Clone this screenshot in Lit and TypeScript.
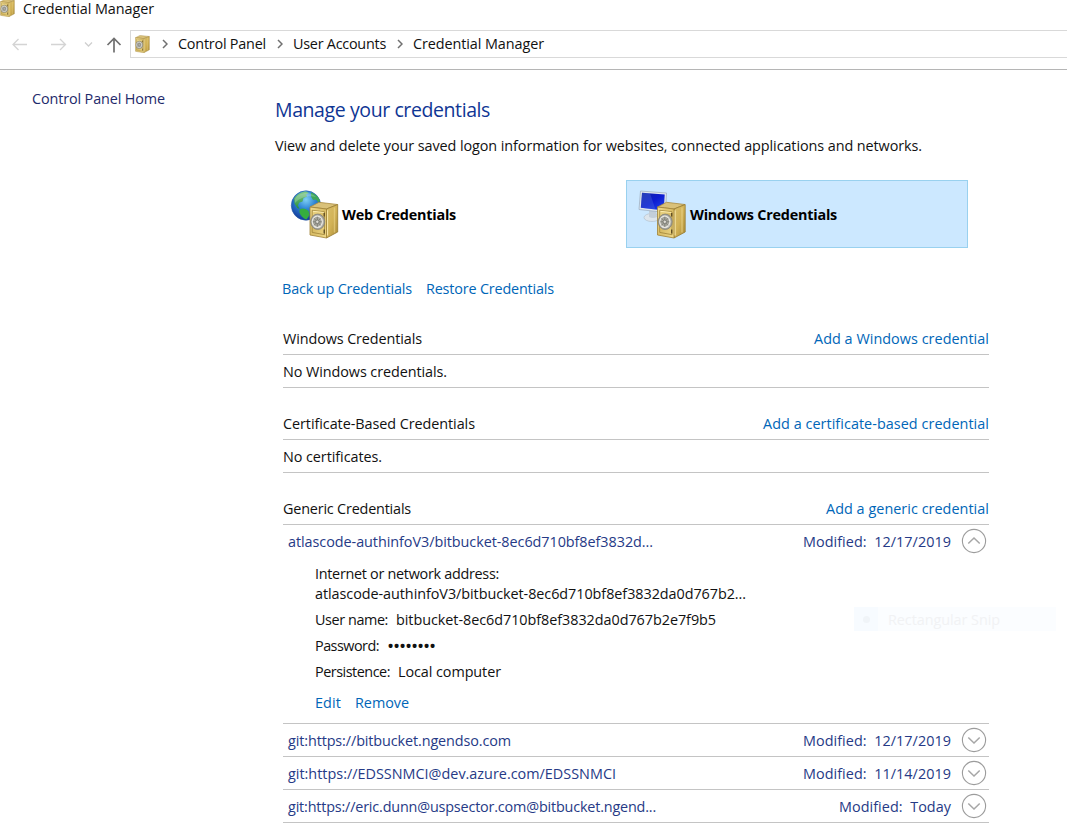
import { LitElement, html, svg, css } from "lit";
import { customElement, property } from "lit/decorators.js";

/** A single line of text whose tracking is adjusted to span a given width. */
@customElement("fit-text")
class FitText extends LitElement {
  @property() text = "";
  @property({ type: Number }) span = 0;

  static styles = css`
    :host { display: block; flex: none; white-space: pre; }
    .line { display: inline-block; }
  `;

  render() {
    return html`<span class="line">${this.text}</span>`;
  }

  updated() {
    const line = this.renderRoot.querySelector<HTMLElement>(".line")!;
    this.style.width = `${this.span}px`;
    line.style.letterSpacing = "0px";
    const natural = line.getBoundingClientRect().width;
    line.style.letterSpacing = `${(this.span - natural) / this.text.length}px`;
  }
}

const t = (text: string, span: number) => html`<fit-text .text=${text} .span=${span}></fit-text>`;

/** Golden safe, drawn in a 30 x 37 box. */
const safe = svg`
  <defs>
    <linearGradient id="front" x1="0" y1="0" x2="1" y2="1">
      <stop offset="0" stop-color="#f0dc90"/><stop offset=".5" stop-color="#d9bd66"/><stop offset="1" stop-color="#efd98a"/>
    </linearGradient>
    <linearGradient id="side" x1="0" y1="0" x2="1" y2="1">
      <stop offset="0" stop-color="#d8bf6c"/><stop offset=".5" stop-color="#d2b256"/><stop offset="1" stop-color="#a98a35"/>
    </linearGradient>
    <radialGradient id="dial">
      <stop offset="0" stop-color="#a3a29c"/><stop offset=".6" stop-color="#d5d4cd"/><stop offset="1" stop-color="#96958c"/>
    </radialGradient>
  </defs>
  <path d="M1 5.500 10 .8 28.500 3 17.500 7.500Z" fill="#d9c179" stroke="#a98b42" stroke-width=".8" stroke-linejoin="round"/>
  <path d="M17.500 7.500 28.700 3V30.500L17.500 36.500Z" fill="url(#side)" stroke="#967a30" stroke-width=".8" stroke-linejoin="round"/>
  <path d="M1 5.500 17.500 7.500V36.500L1 33.500Z" fill="url(#front)" stroke="#a08236" stroke-width=".8" stroke-linejoin="round"/>
  <path d="M3.200 8.800 15.500 10.300V33.200L3.200 30.900Z" fill="none" stroke="#a0843a" stroke-width=".8"/>
  <path d="M4 9.800 14.800 11M18.600 8.800V34" fill="none" stroke="#fff1b5" stroke-width=".9"/>
  <path d="M25.500 6V31" stroke="#ecd68b" stroke-width="1.500" opacity=".6"/>
  <path d="M15.200 11.500v3.500M15.200 28v4" stroke="#5b4a22" stroke-width="1.300"/>
  <ellipse cx="8.700" cy="20.300" rx="7" ry="7.700" fill="url(#dial)" stroke="#85847c" stroke-width=".8"/>
  <ellipse cx="8.300" cy="20.300" rx="5" ry="5.600" fill="#a8a79f" stroke="#e9e8e2" stroke-width="1.200"/>
  <path d="M3.800 20.300h9M8.300 15.200v10.200M5 16.700l6.600 7.200M11.600 16.700l-6.600 7.200" stroke="#77786f" stroke-width=".8"/>
  <circle cx="8.300" cy="20.300" r="1.700" fill="#dddcd5" stroke="#707069" stroke-width=".7"/>
`;

const smallSafe = html`<svg class="small-safe" width="15" height="18" viewBox="0 0 30 37" preserveAspectRatio="none">${safe}</svg>`;

const webIcon = html`<svg width="50" height="52" viewBox="0 0 50 52">
  <defs>
    <radialGradient id="sea" cx=".5" cy=".3" r=".7">
      <stop offset="0" stop-color="#7fd0f4"/><stop offset=".45" stop-color="#2f86d6"/><stop offset="1" stop-color="#12399a"/>
    </radialGradient>
    <linearGradient id="land" x1="0" y1="0" x2="0" y2="1">
      <stop offset="0" stop-color="#7fc98a"/><stop offset="1" stop-color="#27903a"/>
    </linearGradient>
  </defs>
  <circle cx="16" cy="16.500" r="14.700" fill="url(#sea)" stroke="#265ba4" stroke-width=".6"/>
  <path d="M4 9.500C7 5 12 2.500 16 2.500l3 1.500-3 1.500 1 2-3.500 1.600-1 3.500-3.500 1.200-1 3 1.500 3-2-.5-3-4.500Z" fill="url(#land)"/>
  <path d="M21 3.500c4 1 7.500 4.300 9 8l-1.500 2-2.500-3-3 .5-2-3.500Z" fill="#3fa75b"/>
  <path d="M9.500 20.500c3-2 6.500-1 9 1.500l1 4-3 4.500c-3.500-1-6-4-7-7Z" fill="#35ad3e"/>
  <path d="M5 10C9 3 20 2 26 8 19 6 10 8 5 14Z" fill="#fff" opacity=".22"/>
  <g transform="translate(19 12.500)">${safe}</g>
</svg>`;

const computerIcon = html`<svg width="50" height="52" viewBox="0 0 50 52">
  <defs>
    <linearGradient id="screen" x1="0" y1="0" x2="1" y2="1">
      <stop offset="0" stop-color="#1020a0"/><stop offset=".5" stop-color="#0c1bd0"/><stop offset="1" stop-color="#2048ee"/>
    </linearGradient>
  </defs>
  <ellipse cx="14" cy="28.500" rx="8" ry="4" fill="#dde5ec" stroke="#b4c1cd" stroke-width=".7"/>
  <path d="M11 21h7l1 7q-4 2-8 0Z" fill="#c3ced9"/>
  <path d="M2.500 2 28.500 4 27.500 23.500 1 20.500Z" fill="#e1e7ee" stroke="#9fb1c4" stroke-width=".8" stroke-linejoin="round"/>
  <path d="M4 3.700 26.700 5.500 25.800 21.500 2.800 18.800Z" fill="url(#screen)"/>
  <path d="M4 3.700 12 4.300 17.500 20.500 2.800 18.800Z" fill="#6087e6" opacity=".28"/>
  <g transform="translate(18.500 12.500)">${safe}</g>
</svg>`;

const crumbArrow = html`<svg class="crumb-arrow" width="6" height="10" viewBox="0 0 6 10"><path d="M1 1l4 4-4 4" fill="none" stroke="#707070" stroke-width="1.500"/></svg>`;

const toggle = (open: boolean) => html`<svg class="toggle" width="26" height="26" viewBox="0 0 26 26" fill="none">
  <circle cx="13" cy="13" r="11.600" stroke="#9c9c9c" stroke-width="1.100"/>
  <path d=${open ? "M7.300 15.500 13 10l5.700 5.500" : "M7.300 10.500 13 16l5.700-5.500"} stroke="#a6a6a6" stroke-width="1.500"/>
</svg>`;

@customElement("app-root")
class AppRoot extends LitElement {
  static styles = css`
    :host {
      display: block; position: relative; width: 1067px; height: 825px; overflow: hidden;
      background: #fff; color: #111;
      font: 14.4px/20px "Open Sans", "Noto Sans", sans-serif;
    }
    svg { display: block; flex: none; }
    .title { display: flex; height: 30px; align-items: flex-start; }
    .title fit-text { margin-left: 8px; line-height: 18px; }
    .title .small-safe { margin-top: -1px; }
    .nav { display: flex; height: 39px; border-bottom: 1px solid #b5b5b5; }
    .arrows { width: 130px; }
    .address { flex: 1; box-sizing: border-box; height: 28px; display: flex; align-items: center;
      border: 1px solid #d9d9d9; border-right: 0; padding-left: 4px; }
    .address .small-safe { margin-right: 12px; }
    .crumb-arrow { margin-right: 10px; }
    .address fit-text { margin-right: 11px; }
    .body { display: grid; grid-template-columns: 275px 714px; }
    .side { padding: 19px 0 0 32px; color: #1e2a6b; }
    .main { padding-top: 26px; }
    .heading { font-size: 19.5px; line-height: 28px; color: #0f3694; }
    .intro { margin-top: 12px; }
    .vaults { display: flex; margin: 24px 0 0 8px; height: 68px; }
    .vault { display: flex; align-items: center; box-sizing: border-box; width: 343px; height: 68px;
      font-weight: 700; color: #000; padding-left: 7px; }
    .vault fit-text { margin-left: 2px; padding-top: 2px; }
    .vault.selected { width: 342px; padding-left: 11px; background: #cce8ff; border: 1px solid #99d1ef; }
    .vault svg { margin-top: 2px; }
    .links { display: flex; gap: 14px; color: #0066b8; }
    .vault-links { margin: 31px 0 0 7px; }
    .section { margin: 19px 0 0 8px; }
    .section.first { margin-top: 23px; }
    .row { display: flex; box-sizing: border-box; height: 33px; align-items: center;
      justify-content: space-between; border-bottom: 1px solid #c4c4c4; }
    .row fit-text { padding-top: 2px; }
    .row .action { color: #0066b8; }
    .entry { color: #263a86; padding: 0 2px 0 5px; }
    .entry.open { border-bottom-color: transparent; }
    .stamp { display: flex; align-items: center; gap: 10px; }
    .details { box-sizing: border-box; height: 166px; padding: 6px 0 0 32px; border-bottom: 1px solid #c4c4c4; }
    .pair { display: flex; height: 20px; margin-top: 6px; gap: 8px; }
    .details .links { margin-top: 11px; }
    .bullets { font-size: 19px; }
    .snip { position: absolute; left: 854px; top: 607px; width: 202px; height: 24px; display: flex;
      align-items: center; background: #fbfdff; color: #f1f2f4; }
    .snip fit-text { padding-top: 2px; }
    .snip-icon { width: 24px; height: 24px; background: #f7fbff; display: grid; place-items: center; margin-right: 10px; }
    .snip-dot { width: 7px; height: 7px; border-radius: 50%; background: #f0f4f8; }
  `;

  private entry(name: string, nameSpan: number, when: string, whenSpan: number, open = false) {
    return html`<div class="row entry ${open ? "open" : ""}">
      ${t(name, nameSpan)}
      <div class="stamp">${t(`Modified:  ${when}`, whenSpan)}${toggle(open)}</div>
    </div>`;
  }

  private section(title: string, span: number, action: string, actionSpan: number) {
    return html`<div class="row">${t(title, span)}<div class="action">${t(action, actionSpan)}</div></div>`;
  }

  render() {
    return html`
      <div class="title">${smallSafe}${t("Credential Manager", 131)}</div>
      <div class="nav">
        <svg class="arrows" width="130" height="28" viewBox="0 0 130 28" fill="none">
          <path d="M27 14.500H13M18.500 9 13 14.500l5.500 5.500" stroke="#d4d4d4" stroke-width="1.300"/>
          <path d="M51 14.500h14.500M60 9l5.500 5.500L60 20" stroke="#d4d4d4" stroke-width="1.300"/>
          <path d="M85 12.500l3.500 3.500 3.500-3.500" stroke="#cfcfcf" stroke-width="1.300"/>
          <path d="M114 22.500V8.500M107.500 15 114 8.500l6.500 6.500" stroke="#707070" stroke-width="1.700"/>
        </svg>
        <div class="address">
          ${smallSafe}${crumbArrow}${t("Control Panel", 88)}
          ${crumbArrow}${t("User Accounts", 93)}
          ${crumbArrow}${t("Credential Manager", 131)}
        </div>
      </div>
      <div class="body">
        <div class="side">${t("Control Panel Home", 133)}</div>
        <div class="main">
          <div class="heading">${t("Manage your credentials", 215)}</div>
          <div class="intro">${t("View and delete your saved logon information for websites, connected applications and networks.", 647)}</div>
          <div class="vaults">
            <div class="vault">${webIcon}${t("Web Credentials", 114)}</div>
            <div class="vault selected">${computerIcon}${t("Windows Credentials", 147)}</div>
          </div>
          <div class="links vault-links">${t("Back up Credentials", 130)}${t("Restore Credentials", 128)}</div>
          <div class="section first">
            ${this.section("Windows Credentials", 139, "Add a Windows credential", 175)}
            <div class="row">${t("No Windows credentials.", 164)}</div>
          </div>
          <div class="section">
            ${this.section("Certificate-Based Credentials", 192, "Add a certificate-based credential", 226)}
            <div class="row">${t("No certificates.", 99)}</div>
          </div>
          <div class="section">
            ${this.section("Generic Credentials", 128, "Add a generic credential", 163)}
            ${this.entry("atlascode-authinfoV3/bitbucket-8ec6d710bf8ef3832d...", 365, "12/17/2019", 148, true)}
            <div class="details">
              ${t("Internet or network address:", 184)}
              ${t("atlascode-authinfoV3/bitbucket-8ec6d710bf8ef3832da0d767b2...", 431)}
              <div class="pair">${t("User name:", 73)}${t("bitbucket-8ec6d710bf8ef3832da0d767b2e7f9b5", 320)}</div>
              <div class="pair">${t("Password:", 64)}<div class="bullets">${t("••••••••", 48)}</div></div>
              <div class="pair">${t("Persistence:", 75)}${t("Local computer", 103)}</div>
              <div class="links">${t("Edit", 26)}${t("Remove", 54)}</div>
            </div>
            ${this.entry("git:https://bitbucket.ngendso.com", 223, "12/17/2019", 148)}
            ${this.entry("git:https://EDSSNMCI@dev.azure.com/EDSSNMCI", 328, "11/14/2019", 148)}
            ${this.entry("git:https://eric.dunn@uspsector.com@bitbucket.ngend...", 368, "Today", 112)}
          </div>
        </div>
      </div>
      <div class="snip"><div class="snip-icon"><span class="snip-dot"></span></div>${t("Rectangular Snip", 112)}</div>
    `;
  }
}
